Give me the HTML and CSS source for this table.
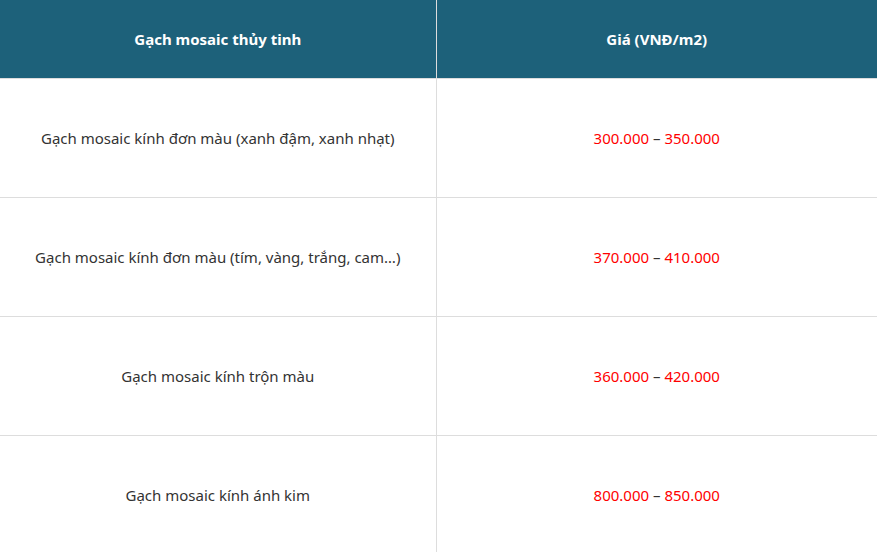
FILE: index.html
```html
<!DOCTYPE html>
<html lang="vi">
<head>
<meta charset="utf-8">
<link rel="stylesheet" href="styles.css">
</head>
<body>
<table class="price-table">
  <colgroup>
    <col class="col-name">
    <col class="col-price">
  </colgroup>
  <thead>
    <tr>
      <th>Gạch mosaic thủy tinh</th>
      <th>Giá (VNĐ/m2)</th>
    </tr>
  </thead>
  <tbody>
    <tr>
      <td>Gạch mosaic kính đơn màu (xanh đậm, xanh nhạt)</td>
      <td><span class="price">300.000</span> – <span class="price">350.000</span></td>
    </tr>
    <tr>
      <td>Gạch mosaic kính đơn màu (tím, vàng, trắng, cam…)</td>
      <td><span class="price">370.000</span> – <span class="price">410.000</span></td>
    </tr>
    <tr>
      <td>Gạch mosaic kính trộn màu</td>
      <td><span class="price">360.000</span> – <span class="price">420.000</span></td>
    </tr>
    <tr>
      <td>Gạch mosaic kính ánh kim</td>
      <td><span class="price">800.000</span> – <span class="price">850.000</span></td>
    </tr>
  </tbody>
</table>
</body>
</html>
```
FILE: styles.css
```css
html, body {
  margin: 0;
  padding: 0;
  background: #ffffff;
}
body {
  font-family: "Noto Sans", "Open Sans", sans-serif;
  font-size: 15px;
  color: #333333;
}
.price-table {
  width: 877px;
  border-collapse: collapse;
  table-layout: fixed;
}
.col-name { width: 436px; }
.col-price { width: 441px; }
.price-table th,
.price-table td {
  text-align: center;
  vertical-align: middle;
  border: 1px solid #dddddd;
  border-top: none;
  padding: 0 10px;
}
.price-table tr > :first-child { border-left: none; }
.price-table tr > :last-child { border-right: none; }
.price-table th {
  background: #1d617a;
  color: #ffffff;
  font-weight: 700;
  height: 78px;
  font-size: 15px;
}
.price-table td {
  height: 118px;
}
.price {
  color: #ff0000;
}
```
